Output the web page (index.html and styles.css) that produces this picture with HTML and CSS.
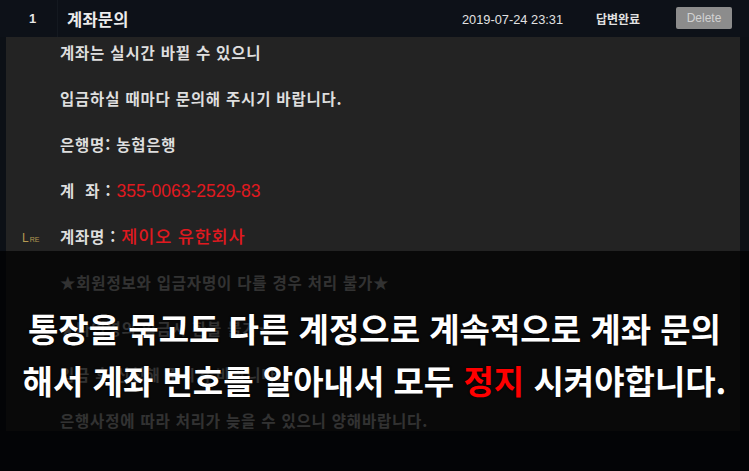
FILE: index.html
```html
<!DOCTYPE html>
<html lang="ko">
<head>
<meta charset="utf-8">
<link rel="stylesheet" href="styles.css">
</head>
<body>
<div class="page">
  <div class="head">
    <div class="num">1</div>
    <div class="title">계좌문의</div>
    <div class="date">2019-07-24 23:31</div>
    <div class="status">답변완료</div>
    <div class="del">Delete</div>
  </div>
  <div class="panel">
    <div class="row">계좌는 실시간 바뀔 수 있으니</div>
    <div class="row">입금하실 때마다 문의해 주시기 바랍니다.</div>
    <div class="row">은행명: 농협은행</div>
    <div class="row">계&nbsp;&nbsp;좌 : <span class="acct">355-0063-2529-83</span></div>
    <div class="row re"><span class="reicon">L<small>RE</small></span>계좌명 : <span class="name">제이오 유한회사</span></div>
    <div class="row dim">★회원정보와 입금자명이 다를 경우 처리 불가★</div>
    <div class="row dim">★타인명의 입금시 환불 불가★</div>
    <div class="row dim">입금 후 신청해 주시기 바랍니다.</div>
    <div class="row dim">은행사정에 따라 처리가 늦을 수 있으니 양해바랍니다.</div>
  </div>
  <div class="overlay">
    <p class="big">통장을 묶고도 다른 계정으로 계속적으로 계좌 문의</p>
    <p class="big">해서 계좌 번호를 알아내서 모두 <span class="red">정지</span> 시켜야합니다.</p>
  </div>
</div>
</body>
</html>
```

FILE: styles.css
```css
html, body {
  margin: 0;
  padding: 0;
  background: #0c1016;
}
.page {
  position: relative;
  width: 749px;
  height: 471px;
  overflow: hidden;
  font-family: "Noto Sans CJK KR", "Noto Sans", sans-serif;
  color: #dedede;
}
.head {
  display: flex;
  align-items: center;
  height: 37px;
  background: #0d1118;
}
.num {
  width: 58px;
  padding-left: 8px;
  box-sizing: border-box;
  text-align: center;
  font-family: "Liberation Sans", sans-serif;
  font-size: 13px;
  font-weight: 700;
  color: #e6e6e6;
  height: 37px;
  line-height: 37px;
  border-right: 1px solid #141920;
}
.title {
  flex: 1;
  padding-left: 9px;
  font-size: 16.5px;
  font-weight: 700;
  color: #ececec;
  letter-spacing: 0.2px;
}
.date {
  width: 134px;
  font-family: "Liberation Sans", sans-serif;
  font-size: 12.8px;
  color: #e2e2e2;
  height: 37px;
  line-height: 39px;
}
.status {
  width: 80px;
  font-size: 12px;
  font-weight: 700;
  color: #e2e2e2;
}
.del {
  width: 56px;
  height: 22px;
  line-height: 22px;
  margin-right: 17px;
  margin-bottom: 1px;
  background: #8c8c8c;
  border-radius: 2px;
  text-align: center;
  font-family: "Liberation Sans", sans-serif;
  font-size: 12px;
  color: #d2d2d2;
}
.panel {
  margin: 0 9px 0 6px;
  height: 394px;
  box-sizing: border-box;
  padding: 4px 0 0 54px;
  background: #232323;
  display: flex;
  flex-direction: column;
  gap: 24px;
}
.row {
  position: relative;
  height: 22px;
  line-height: 22px;
  font-size: 15.5px;
  font-weight: 700;
  letter-spacing: 0.8px;
  color: #dedede;
  white-space: nowrap;
}
.row.dim {
  color: #b4b4b4;
}
.acct {
  font-family: "Liberation Sans", sans-serif;
  font-size: 17.5px;
  font-weight: 400;
  letter-spacing: 0;
  color: #e0191f;
}
.name {
  font-size: 17.5px;
  font-weight: 500;
  color: #e0191f;
  letter-spacing: 0.8px;
}
.reicon {
  position: absolute;
  left: -38px;
  top: 2px;
  font-family: "Liberation Sans", sans-serif;
  font-size: 12px;
  font-weight: 400;
  color: #b59a52;
  letter-spacing: 0;
}
.reicon small {
  font-size: 7px;
  margin-left: 1px;
}
.overlay {
  position: absolute;
  left: 0;
  right: 0;
  top: 251px;
  bottom: 0;
  background: rgba(0, 0, 0, 0.72);
  padding-top: 51px;
  display: flex;
  flex-direction: column;
  align-items: center;
}
.big {
  margin: 0;
  height: 52px;
  line-height: 52px;
  font-size: 33px;
  font-weight: 700;
  color: #ffffff;
  white-space: nowrap;
  text-shadow: 0 0 2px #000;
}
.red {
  color: #ff0000;
}
```
